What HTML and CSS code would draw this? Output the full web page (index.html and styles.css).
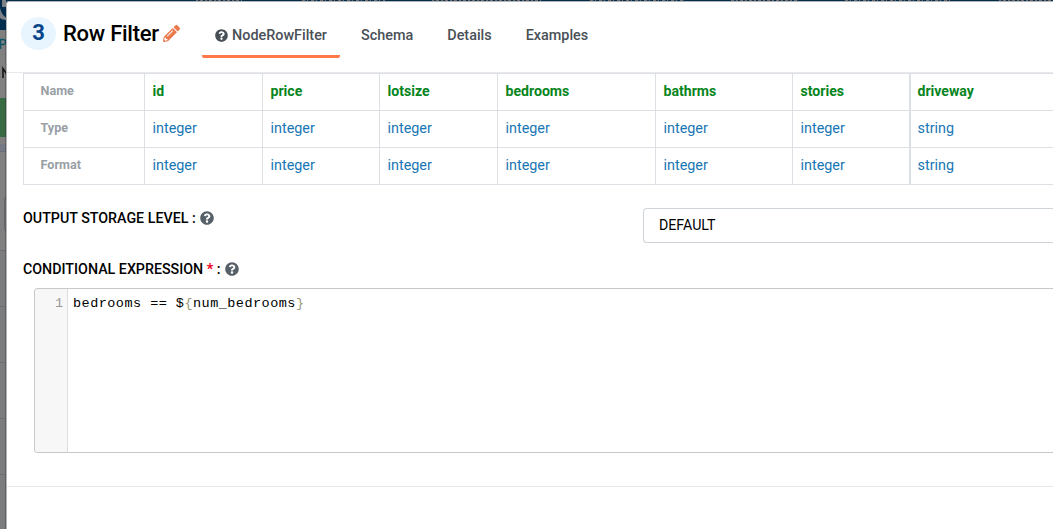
FILE: index.html
```html
<!DOCTYPE html>
<html lang="en">
<head>
<meta charset="utf-8">
<title>Row Filter</title>
<link rel="stylesheet" href="styles.css">
</head>
<body>
<svg class="symbols" aria-hidden="true">
  <symbol id="help" viewBox="0 0 512 512"><path d="M504 256c0 136.997-111.043 248-248 248S8 392.997 8 256C8 119.083 119.043 8 256 8s248 111.083 248 248zM262.655 90c-54.497 0-89.255 22.957-116.549 63.758-3.536 5.286-2.353 12.415 2.715 16.258l34.699 26.31c5.205 3.947 12.621 3.008 16.665-2.122 17.864-22.658 30.113-35.797 57.303-35.797 20.429 0 45.698 13.148 45.698 32.958 0 14.976-12.363 22.667-32.534 33.976C247.128 238.528 216 254.941 216 296v4c0 6.627 5.373 12 12 12h56c6.627 0 12-5.373 12-12v-1.333c0-28.462 83.186-29.647 83.186-106.667 0-58.002-60.165-102-116.531-102zM256 338c-25.365 0-46 20.635-46 46 0 25.364 20.635 46 46 46s46-20.636 46-46c0-25.365-20.635-46-46-46z"/></symbol>
</svg>
<div class="app">
  <aside class="page-edge">
    <svg width="7" height="529" viewBox="0 0 7 529" aria-hidden="true">
      <path fill="#002d4f" d="M0 0h7v30H0z"/>
      <path fill="#7d8085" d="M2 0h5v7H2zM0 8q2 8 7 10v2Q2 20 0 18z"/>
      <path stroke="#0c5668" stroke-width="1.3" fill="none" d="M.6 49V39.500h2.500q2.500 0 2.500 2.500t-2.500 2.500H.6"/>
      <path stroke="#111" stroke-width="1.500" fill="none" d="M3 78V68.500l4 6"/>
      <path fill="#386b43" d="M0 98h7v39H0z"/>
      <path fill="#747985" d="M0 144h7v7H0z"/>
      <path fill="#6b7078" d="M0 151h7v1H0z"/>
      <path fill="none" stroke="#60646a" d="M7 196.500q-2.500 0-2.500 4v27q0 4 2.500 4"/>
      <path fill="#7b7c7e" d="M0 251h7v278H0z"/>
      <path fill="#6c6d70" d="M0 250h7v1H0zM0 306h7v1H0zM0 362h7v1H0zM0 418h7v1H0zM0 474h7v1H0z"/>
      <path fill="#000" fill-opacity=".22" d="M5 30h1v499H5z"/>
    </svg>
  </aside>
  <main class="modal">
    <header class="head">
      <span class="step">3</span>
      <h1 class="title">Row Filter</h1>
      <svg class="pencil" viewBox="0 0 512 512" aria-hidden="true"><path d="M497.900 142.100l-46.100 46.100c-4.700 4.700-12.300 4.700-17 0l-111-111c-4.700-4.700-4.700-12.300 0-17l46.100-46.100c18.700-18.700 49.100-18.700 67.900 0l60.100 60.100c18.800 18.700 18.800 49.100 0 67.900zM284.200 99.800L21.600 362.400.4 483.900c-2.900 16.400 11.400 30.600 27.800 27.800l121.500-21.300 262.600-262.600c4.700-4.700 4.700-12.300 0-17l-111-111c-4.800-4.700-12.400-4.700-17.100 0zM124.100 339.900c-5.500-5.500-5.500-14.300 0-19.800l154-154c5.500-5.500 14.300-5.500 19.800 0s5.500 14.300 0 19.800l-154 154c-5.500 5.500-14.300 5.500-19.800 0zM88 424h48v36.300l-64.500 11.300-31.100-31.100L51.700 376H88v48z"/></svg>
      <nav class="tabs">
        <a class="tab active"><svg class="help"><use href="#help"/></svg><span>NodeRowFilter</span></a>
        <a class="tab">Schema</a>
        <a class="tab">Details</a>
        <a class="tab">Examples</a>
      </nav>
    </header>
    <section class="body">
      <div class="schema">
        <div class="cell label">Name</div><div class="cell name">id</div><div class="cell name">price</div><div class="cell name">lotsize</div><div class="cell name">bedrooms</div><div class="cell name">bathrms</div><div class="cell name">stories</div><div class="cell name last">driveway</div>
        <div class="cell label">Type</div><div class="cell">integer</div><div class="cell">integer</div><div class="cell">integer</div><div class="cell">integer</div><div class="cell">integer</div><div class="cell">integer</div><div class="cell last">string</div>
        <div class="cell label">Format</div><div class="cell">integer</div><div class="cell">integer</div><div class="cell">integer</div><div class="cell">integer</div><div class="cell">integer</div><div class="cell">integer</div><div class="cell last">string</div>
      </div>
      <div class="field">
        <label class="caption"><span class="storage">OUTPUT STORAGE LEVEL :</span><svg class="help"><use href="#help"/></svg></label>
        <div class="select">DEFAULT</div>
      </div>
      <label class="caption expression"><span class="cond">CONDITIONAL EXPRESSION <b class="required">*</b> :</span><svg class="help"><use href="#help"/></svg></label>
      <div class="editor">
        <div class="gutter">1</div>
        <code class="code">bedrooms == $<span class="brace">{</span>num_bedrooms<span class="brace">}</span></code>
      </div>
    </section>
    <footer class="foot"></footer>
  </main>
</div>
</body>
</html>
```
FILE: styles.css
```css
* { box-sizing: border-box; }
body { margin: 0; font-family: Roboto, "Liberation Sans", sans-serif; font-size: 14px; color: #000; }
.symbols { position: absolute; width: 0; height: 0; }
.app {
  display: flex;
  width: 1053px;
  height: 529px;
  overflow: hidden;
  padding-top: 1px;
  background:
    repeating-linear-gradient(90deg, #6d7074 0 2px, #17364f 2px 4px, #6d7074 4px 7px, #002d4b 7px 9px) 196px 0 / 46px 1px no-repeat,
    repeating-linear-gradient(90deg, #6d7074 0 3px, #17364f 3px 5px, #6d7074 5px 6px, #002d4b 6px 9px) 302px 0 / 83px 1px no-repeat,
    repeating-linear-gradient(90deg, #6d7074 0 2px, #17364f 2px 4px, #6d7074 4px 7px, #002d4b 7px 9px) 432px 0 / 109px 1px no-repeat,
    repeating-linear-gradient(90deg, #6d7074 0 3px, #17364f 3px 5px, #6d7074 5px 6px, #002d4b 6px 9px) 590px 0 / 95px 1px no-repeat,
    repeating-linear-gradient(90deg, #6d7074 0 3px, #17364f 3px 5px, #6d7074 5px 7px, #002d4b 7px 9px) 731px 0 / 68px 1px no-repeat,
    repeating-linear-gradient(90deg, #6d7074 0 3px, #17364f 3px 5px, #6d7074 5px 6px, #002d4b 6px 9px) 845px 0 / 108px 1px no-repeat,
    repeating-linear-gradient(90deg, #6d7074 0 2px, #17364f 2px 4px, #6d7074 4px 7px, #002d4b 7px 9px) 999px 0 / 54px 1px no-repeat,
    linear-gradient(#002d4b, #002d4b) 0 0 / 100% 3px no-repeat,
    #808080;
}
.page-edge { width: 6px; flex: none; margin-top: -1px; overflow: hidden; }
.page-edge svg { display: block; }
.modal {
  flex: 1;
  min-width: 0;
  display: flex;
  flex-direction: column;
  background: #fff;
  border: solid #b5b5b7;
  border-width: 1px 0 0 1px;
  border-top-left-radius: 3px;
}
.head { display: flex; height: 71px; border-bottom: 1px solid #e7e9ec; padding-left: 14px; flex: none; }
.step {
  width: 35px; height: 33px; margin-top: 15px; border-radius: 50%;
  background: #e8f5fe; color: #07458a;
  font-size: 22px; font-weight: 700; line-height: 32px; text-align: center;
}
.title { margin: 15px 0 0 7px; width: 100px; font-size: 22px; font-weight: 500; line-height: 34px; white-space: nowrap; letter-spacing: -0.25px; }
.pencil { width: 17px; height: 17px; margin-top: 23px; fill: #e97a4f; overflow: visible; }
.tabs { display: flex; margin-left: 22px; height: 56px; }
.tab {
  display: flex; align-items: center; padding: 10px 0 0; margin-right: 34px;
  color: #495057; font-weight: 500; font-size: 14.4px; white-space: nowrap;
}
.tab.active { width: 138px; margin-right: 21px; justify-content: center; gap: 4px; border-bottom: 3px solid #ff7849; border-radius: 2px; padding-top: 13px; }
.help { width: 14px; height: 14px; fill: #566069; flex: none; }
.tab .help { width: 13px; height: 13px; fill: #495057; }
.body { height: 413px; padding-left: 16px; overflow: hidden; flex: none; }
.schema {
  display: grid;
  width: 1100px;
  grid-template-columns: 121px 118px 117px 118px 158px 137px 117px 1fr;
  grid-auto-rows: 37px;
  border-top: 1px solid #dcdfe4;
}
.cell { border-left: 1px solid #dcdfe4; border-bottom: 1px solid #dcdfe4; padding-left: 7.5px; line-height: 35px; color: #1976b5; font-size: 14.4px; }
.cell.label { padding-left: 16.5px; color: #999fa5; font-size: 12.6px; font-weight: 700; line-height: 34px; }
.cell.name { color: #078520; font-weight: 700; font-size: 14.1px; }
.cell.last { border-left-width: 2px; padding-left: 6.5px; }
.field { display: flex; justify-content: space-between; margin-top: 23px; height: 35px; }
.caption { display: flex; align-items: center; height: 20px; font-weight: 500; font-size: 14.25px; gap: 4px; white-space: nowrap; }
.required { color: #f00020; }
.select { width: 410px; height: 35px; border: solid #ced4da; border-width: 1px 0 1px 1px; border-radius: 4px 0 0 4px; padding-left: 15px; line-height: 33px; font-size: 14.2px; }
.expression { margin-top: 16px; }
.editor {
  display: flex; height: 165px; margin: 9px 0 0 11px;
  border: solid #c8c8c8; border-width: 1px 0 1px 1px; border-radius: 4px 0 0 4px;
  font-family: "Liberation Mono", monospace; font-size: 13.5px; line-height: 18px; overflow: hidden;
}
.gutter { width: 33px; padding: 6px 4px 0 0; text-align: right; color: #999; background: #f7f7f7; border-right: 1px solid #ddd; }
.code { font: inherit; padding: 6px 0 0 5px; letter-spacing: 0.47px; white-space: pre; }
.brace { color: #999977; }
.foot { flex: 1; border-top: 1px solid #e7e8ea; }
```
